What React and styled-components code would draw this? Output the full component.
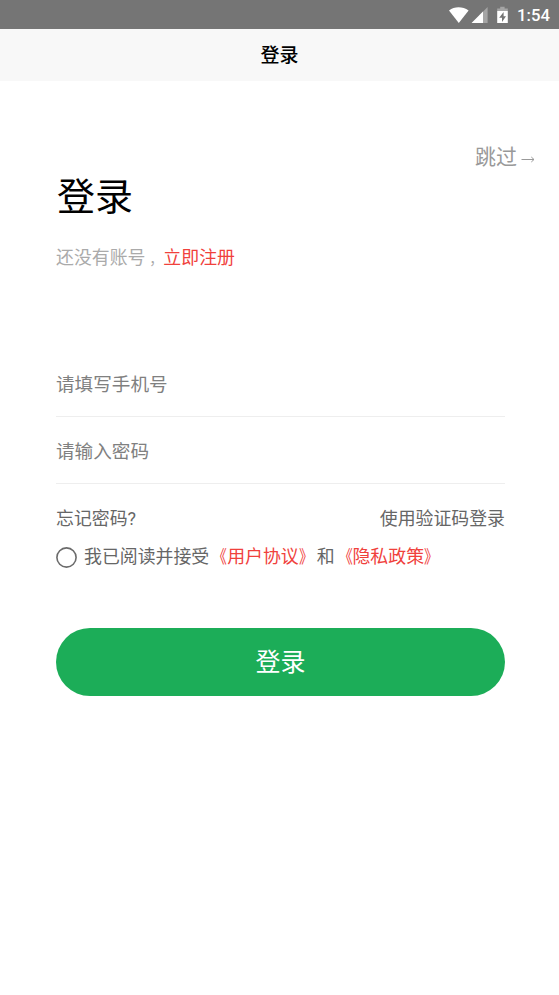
import React, { useState } from "react";
import styled, { createGlobalStyle } from "styled-components";

const GlobalStyle = createGlobalStyle`
  * {
    box-sizing: border-box;
  }
  body {
    margin: 0;
    background-color: #fff;
    font-family: Roboto, "Noto Sans CJK SC", sans-serif;
  }
`;

const Container = styled.div`
  min-height: 100vh;
  background-color: #fff;
  overflow: hidden;
`;

const StatusBar = styled.div`
  height: 29px;
  padding-right: 9px;
  display: flex;
  align-items: center;
  justify-content: flex-end;
  background-color: #757575;
  color: #fff;
`;

const StatusIcons = styled.svg`
  width: 62px;
  height: 20px;
  margin-right: 7px;
`;

const Time = styled.span`
  width: 33px;
  padding-top: 2px;
  font-size: 16.7px;
  font-weight: 500;
  line-height: 29px;
  text-align: center;
`;

const NavBar = styled.div`
  height: 52px;
  padding-bottom: 4px;
  display: flex;
  align-items: center;
  justify-content: center;
  background-color: #f8f8f8;
  color: #000;
  font-size: 19px;
  font-weight: 500;
`;

const Wrapper = styled.div`
  padding: 59px 54px 0 56px;
`;

const Skip = styled.div`
  display: flex;
  align-items: center;
  justify-content: flex-end;
  margin-right: -33px;
  height: 30px;
  font-size: 21px;
  color: #999;
  cursor: pointer;
`;

const Arrow = styled.svg`
  width: 21px;
  height: 20px;
  margin-top: 8px;
`;

const Title = styled.h1`
  margin: 2px 0 0;
  padding-left: 1px;
  font-size: 38px;
  font-weight: 400;
  line-height: 50px;
  color: #000;
`;

const Desc = styled.p`
  margin: 23px 0 0;
  font-size: 17.9px;
  line-height: 26px;
  color: #aaa;
`;

const Comma = styled.span`
  padding-left: 3.9px;
  font-size: 14px;
`;

const Link = styled.span`
  color: #f0413c;
  cursor: pointer;
`;

const Quote = styled.span`
  display: inline-block;
  transform: scaleX(0.8);
  transform-origin: ${(props) => (props.$open ? "right" : "left")};
`;

const Form = styled.div`
  margin-top: 78px;
`;

const Input = styled.input`
  display: block;
  width: 100%;
  height: 67px;
  padding: 4px 0 0;
  border: none;
  border-bottom: 1px solid #eee;
  border-radius: 0;
  outline: none;
  background-color: transparent;
  font-family: inherit;
  font-size: 18.6px;
  color: #333;

  &::placeholder {
    color: #808080;
    opacity: 1;
  }
`;

const Options = styled.div`
  display: flex;
  justify-content: space-between;
  margin-top: 21px;
  font-size: 17.9px;
  line-height: 27px;
  color: #666;
`;

const Agreement = styled.div`
  display: flex;
  align-items: center;
  height: 26px;
  margin-top: 12px;
  font-size: 17.9px;
  line-height: 26px;
  color: #666;
  white-space: nowrap;
`;

const Radio = styled.svg`
  width: 21px;
  height: 21px;
  margin: 0 7px 0 0;
  fill: ${(props) => (props.$checked ? "#1cad58" : "none")};
  stroke: #6b6b6b;
  stroke-width: 1.6;
  cursor: pointer;
`;

const Button = styled.button`
  display: block;
  width: 100%;
  height: 68px;
  margin-top: 58px;
  padding: 0 0 4px;
  border: none;
  border-radius: 34px;
  background-color: #1cad58;
  color: #fff;
  font-family: inherit;
  font-size: 25px;
  cursor: pointer;
`;

const App = () => {
  const [checked, setChecked] = useState(false);

  return (
    <Container>
      <GlobalStyle />
      <StatusBar>
        <StatusIcons viewBox="0 0 62 20">
          {/* wifi */}
          <path d="M1 5.6C6.5 1.2 14.5 1.2 20.6 5.6L10.8 18Z" fill="#fff" />
          {/* signal */}
          <path d="M39.6 2V18H23.6Z" fill="#fff" fillOpacity="0.35" />
          <path d="M35 6.6V18H23.6Z" fill="#fff" />
          {/* battery */}
          <path
            d="M49.2 3.6H52.2V1.8H56.6V3.6H59.8V6H49.2Z"
            fill="#fff"
            fillOpacity="0.35"
          />
          <path
            d="M49.2 6H59.8V18H49.2ZM55.6 7L51.2 12.8H54V17L58 11.2H55.6Z"
            fill="#fff"
            fillRule="evenodd"
          />
        </StatusIcons>
        <Time>1:54</Time>
      </StatusBar>
      <NavBar>登录</NavBar>
      <Wrapper>
        <Skip>
          跳过
          <Arrow viewBox="0 0 21 20" fill="none" stroke="#999">
            <path d="M4.5 10.5H17M14.3 8L17 10.5L14.3 13" />
          </Arrow>
        </Skip>
        <Title>登录</Title>
        <Desc>
          还没有账号<Comma>，</Comma>
          <Link>立即注册</Link>
        </Desc>
        <Form>
          <Input type="tel" placeholder="请填写手机号" />
          <Input type="password" placeholder="请输入密码" />
        </Form>
        <Options>
          <span>忘记密码?</span>
          <span>使用验证码登录</span>
        </Options>
        <Agreement>
          <Radio
            viewBox="0 0 21 21"
            $checked={checked}
            onClick={() => setChecked(!checked)}
          >
            <circle cx="10.5" cy="10.5" r="9.6" />
          </Radio>
          <span>我已阅读并接受</span>
          <Link>
            <Quote $open>《</Quote>用户协议<Quote>》</Quote>
          </Link>
          <span>和</span>
          <Link>
            <Quote $open>《</Quote>隐私政策<Quote>》</Quote>
          </Link>
        </Agreement>
        <Button>登录</Button>
      </Wrapper>
    </Container>
  );
};

export default App;
